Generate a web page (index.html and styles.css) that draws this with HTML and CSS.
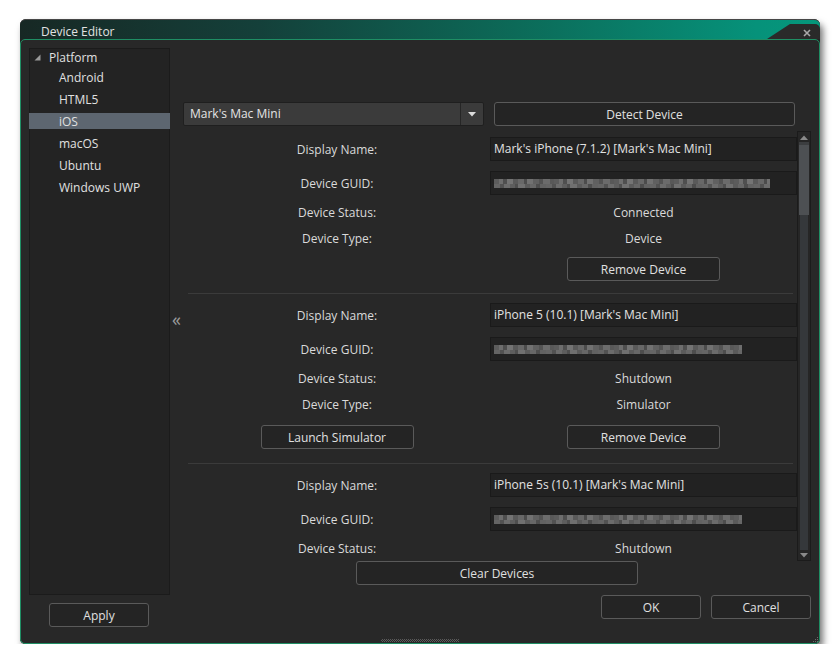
FILE: index.html
```html
<!DOCTYPE html>
<html>
<head>
<meta charset="utf-8">
<title>Device Editor</title>
<link rel="stylesheet" href="styles.css">
</head>
<body>
<div class="window">
  <div class="titlebar">
    <span class="title">Device Editor</span>
    <div class="notch">
      <svg class="close" width="8" height="8" viewBox="0 0 8 8"><path d="M1 1L7 7M7 1L1 7" stroke="#a8a8a8" stroke-width="1.6"/></svg>
    </div>
  </div>
  <div class="frame">
    <div class="sidebar">
      <div class="tree">
        <div class="tree-row root">
          <svg class="caret" width="7" height="7" viewBox="0 0 7 7"><path d="M6.5 0.5V6.5H0.5Z" fill="#9a9a9a"/></svg>
          <span>Platform</span>
        </div>
        <div class="tree-row child">Android</div>
        <div class="tree-row child">HTML5</div>
        <div class="tree-row child selected">iOS</div>
        <div class="tree-row child">macOS</div>
        <div class="tree-row child">Ubuntu</div>
        <div class="tree-row child">Windows UWP</div>
      </div>
      <div class="apply-row"><button class="btn btn-apply">Apply</button></div>
    </div>
    <div class="splitter">«</div>
    <div class="main">
      <div class="topbar">
        <div class="combo">
          <span class="combo-text">Mark's Mac Mini</span>
          <span class="combo-arrow"><svg width="8" height="5" viewBox="0 0 8 5"><path d="M0 0H8L4 4.5Z" fill="#dcdcdc"/></svg></span>
        </div>
        <button class="btn btn-wide">Detect Device</button>
      </div>
      <div class="scroller">
        <div class="list">
          <div class="device first">
            <div class="row row-field">
              <div class="label">Display Name:</div>
              <div class="field">Mark's iPhone (7.1.2) [Mark's Mac Mini]</div>
            </div>
            <div class="row row-field row-guid">
              <div class="label">Device GUID:</div>
              <div class="field"><div class="blur blur-a"></div></div>
            </div>
            <div class="row row-line">
              <div class="label">Device Status:</div>
              <div class="value">Connected</div>
            </div>
            <div class="row row-line">
              <div class="label">Device Type:</div>
              <div class="value">Device</div>
            </div>
            <div class="row row-btns">
              <div class="cell-btn"></div>
              <div class="cell-btn"><button class="btn btn-row">Remove Device</button></div>
            </div>
          </div>
          <div class="sep"></div>
          <div class="device">
            <div class="row row-field">
              <div class="label">Display Name:</div>
              <div class="field">iPhone 5 (10.1) [Mark's Mac Mini]</div>
            </div>
            <div class="row row-field row-guid">
              <div class="label">Device GUID:</div>
              <div class="field"><div class="blur blur-b"></div></div>
            </div>
            <div class="row row-line">
              <div class="label">Device Status:</div>
              <div class="value">Shutdown</div>
            </div>
            <div class="row row-line">
              <div class="label">Device Type:</div>
              <div class="value">Simulator</div>
            </div>
            <div class="row row-btns">
              <div class="cell-btn"><button class="btn btn-row">Launch Simulator</button></div>
              <div class="cell-btn"><button class="btn btn-row">Remove Device</button></div>
            </div>
          </div>
          <div class="sep"></div>
          <div class="device">
            <div class="row row-field">
              <div class="label">Display Name:</div>
              <div class="field">iPhone 5s (10.1) [Mark's Mac Mini]</div>
            </div>
            <div class="row row-field row-guid">
              <div class="label">Device GUID:</div>
              <div class="field"><div class="blur blur-c"></div></div>
            </div>
            <div class="row row-line">
              <div class="label">Device Status:</div>
              <div class="value">Shutdown</div>
            </div>
          </div>
        </div>
        <div class="scrollbar">
          <div class="sb-arrow"><svg width="8" height="5" viewBox="0 0 8 5"><path d="M4 0.5L8 5H0Z" fill="#8a8a8a"/></svg></div>
          <div class="sb-thumb"></div>
          <div class="sb-track"></div>
          <div class="sb-arrow"><svg width="8" height="5" viewBox="0 0 8 5"><path d="M0 0H8L4 4.5Z" fill="#8a8a8a"/></svg></div>
        </div>
      </div>
      <div class="clear-row"><button class="btn btn-clear">Clear Devices</button></div>
      <div class="dialog-buttons">
        <button class="btn btn-dialog">OK</button>
        <button class="btn btn-dialog">Cancel</button>
      </div>
    </div>
    <div class="grip"></div>
    <svg class="corner" width="7" height="7" viewBox="0 0 7 7">
      <rect x="5" y="1" width="1" height="1" fill="#6a6a6a"/>
      <rect x="3" y="3" width="1" height="1" fill="#6a6a6a"/>
      <rect x="5" y="3" width="1" height="1" fill="#6a6a6a"/>
      <rect x="1" y="5" width="1" height="1" fill="#6a6a6a"/>
      <rect x="3" y="5" width="1" height="1" fill="#6a6a6a"/>
      <rect x="5" y="5" width="1" height="1" fill="#6a6a6a"/>
    </svg>
  </div>
</div>
</body>
</html>
```
FILE: styles.css
```css
* { box-sizing: border-box; }
html, body { margin: 0; background: #ffffff; }
body {
  font-family: "Open Sans", "Noto Sans", sans-serif;
  font-size: 12px;
  color: #dedede;
}

.window {
  position: relative;
  width: 800px;
  height: 625px;
  margin: 19px 0 0 20px;
  display: flex;
  flex-direction: column;
  background: #232323;
  border-radius: 6px 6px 5px 5px;
  box-shadow: 3px 5px 7px rgba(0, 0, 0, 0.55);
}

.titlebar {
  position: relative;
  height: 20px;
  flex: none;
  border-top: 1px solid #474747;
  border-radius: 6px 6px 0 0;
  background: linear-gradient(to right, #172824 0%, #14403a 30%, #0c6a58 62%, #06927a 92%, #05977b 100%);
  padding: 2px 0 0 21px;
  line-height: 19px;
}
.title { color: #e2e2e2; font-size: 12px; }

.notch {
  position: absolute;
  right: 0;
  top: 4px;
  width: 53px;
  height: 15px;
  background: #2a2a2a;
  border-top-right-radius: 5px;
  clip-path: polygon(23px 0, 100% 0, 100% 100%, 0 100%);
}
.close { position: absolute; left: 36px; top: 5px; }

.frame {
  position: relative;
  flex: 1;
  display: flex;
  border: 1px solid #1f8e64;
  border-radius: 5px;
  background: #282828;
}

.sidebar {
  width: 149px;
  flex: none;
  padding: 8px 0 0 8px;
  display: flex;
  flex-direction: column;
}
.tree {
  width: 141px;
  height: 547px;
  background: #232323;
  border: 1px solid #1b1b1b;
}
.tree-row {
  height: 16px;
  line-height: 20px;
  display: flex;
  align-items: center;
  color: #e0e0e0;
  margin-bottom: 6px;
}
.tree-row > span, .tree-row { overflow: visible; }
.tree-row.root { margin-bottom: 4px; padding-left: 4px; }
.caret { margin-right: 8px; margin-top: 0; }
.tree-row.child { padding-left: 29px; padding-top: 2px; }
.tree-row.root span { padding-top: 2px; }
.tree-row.selected { background: #5d6670; margin-left: -1px; margin-right: -1px; padding-left: 30px; }

.apply-row { padding: 8px 0 0 20px; }

.splitter {
  width: 13px;
  flex: none;
  height: 547px;
  margin-top: 8px;
  display: flex;
  align-items: center;
  justify-content: center;
  color: #9c9c9c;
  font-size: 18px;
  padding: 0 0 6px 0;
}

.main {
  width: 628px;
  flex: none;
  padding-top: 62px;
  display: flex;
  flex-direction: column;
}

.btn {
  height: 24px;
  padding: 0;
  background: #242424;
  border: 1px solid #5a5a5a;
  border-radius: 3px;
  color: #e0e0e0;
  font-family: inherit;
  font-size: 12px;
}
.btn-apply, .btn-dialog { width: 100px; }
.btn-wide { width: 301px; }
.btn-row { width: 153px; }
.btn-clear { width: 282px; }

.topbar { display: flex; gap: 10px; }
.combo {
  width: 301px;
  height: 24px;
  display: flex;
  background: #3b3b3b;
  border: 1px solid #1f1f1f;
  border-radius: 2px;
}
.combo-text { flex: 1; padding-left: 6px; line-height: 22px; color: #e4e4e4; }
.combo-arrow {
  width: 23px;
  border-left: 1px solid #262626;
  display: flex;
  align-items: center;
  justify-content: center;
  padding-top: 1px;
}

.scroller {
  margin-top: 5px;
  height: 430px;
  display: flex;
  overflow: hidden;
}
.list { width: 614px; padding-top: 6px; }

.device { padding-left: 4px; }
.row {
  display: grid;
  grid-template-columns: 300px 307px;
  column-gap: 3px;
}
.row-field { height: 24px; margin-bottom: 10px; }
.row-guid { margin-bottom: 4px; }
.row-line { height: 26px; }
.row-btns { height: 24px; margin-top: 8px; }
.device.first .row-btns { margin-top: 6px; }

.label, .value {
  display: flex;
  align-items: center;
  justify-content: center;
  color: #dadada;
}
.field {
  height: 24px;
  background: #222222;
  border: 1px solid #1a1a1a;
  padding-left: 3px;
  line-height: 22px;
  color: #e2e2e2;
  display: flex;
  align-items: center;
}
.cell-btn { display: flex; justify-content: center; }

.sep {
  height: 1px;
  background: #3b3b3b;
  margin: 14px 4px 9px 5px;
}
.device.first + .sep { margin-top: 12px; }

.blur {
  height: 9px;
  margin-top: 1px;
  background:
    repeating-linear-gradient(90deg, #5c5c5c 0 5px, #6e6e6e 5px 9px, #4f4f4f 9px 13px, #747474 13px 19px, #5a5a5a 19px 24px, #686868 24px 30px, #4c4c4c 30px 33px, #717171 33px 39px, #606060 39px 45px, #535353 45px 49px, #6b6b6b 49px 56px, #585858 56px 60px) 0 0 / 100% 5px no-repeat,
    repeating-linear-gradient(90deg, #656565 0 6px, #525252 6px 10px, #6c6c6c 10px 16px, #5e5e5e 16px 21px, #4e4e4e 21px 24px, #707070 24px 31px, #5b5b5b 31px 36px, #676767 36px 42px, #4d4d4d 42px 46px, #626262 46px 52px) 0 5px / 100% 4px no-repeat;
}
.blur-a { width: 276px; }
.blur-b { width: 248px; }
.blur-c { width: 248px; }

.scrollbar {
  width: 14px;
  flex: none;
  display: flex;
  flex-direction: column;
  background: #262626;
  border: 1px solid #1b1b1b;
}
.sb-arrow { height: 10px; display: flex; align-items: center; justify-content: center; }
.sb-thumb {
  height: 73px;
  margin: 0 1px;
  background: #4d5053;
  border-top: 3px solid #3c3e40;
}
.sb-track {
  flex: 1;
  margin: 0 2px;
  background: #35383b;
}

.clear-row { display: flex; justify-content: center; }
.dialog-buttons {
  margin-top: 10px;
  display: flex;
  justify-content: flex-end;
  gap: 10px;
}

.grip {
  position: absolute;
  left: 360px;
  bottom: 1px;
  width: 78px;
  height: 3px;
  background-image: repeating-conic-gradient(#5a5a5a 0 25%, transparent 0 50%);
  background-size: 2px 2px;
}
.corner { position: absolute; right: 0; bottom: 0; }
```
